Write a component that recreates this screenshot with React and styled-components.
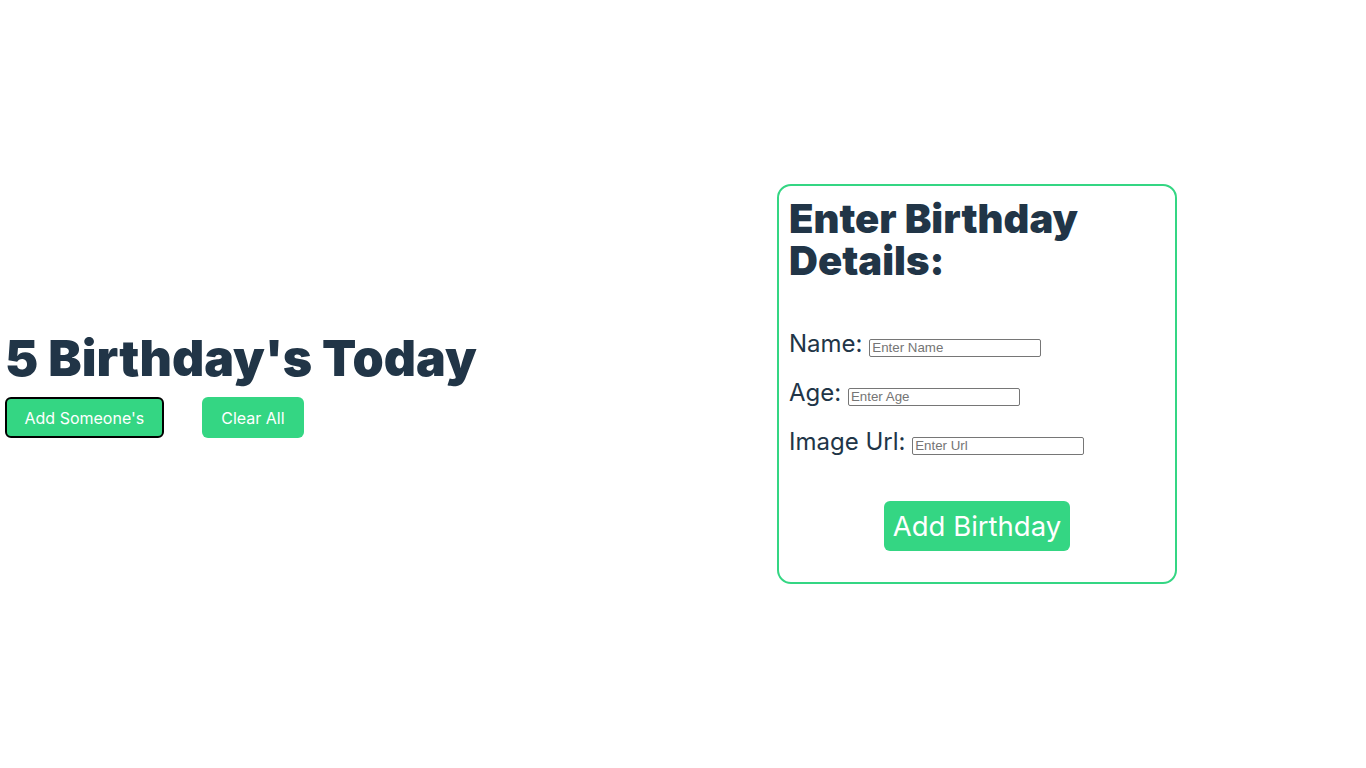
import styled, { createGlobalStyle } from 'styled-components';

const GlobalStyle = createGlobalStyle`
  body {
    margin: 0;
    font-family: Inter, "Noto Sans", sans-serif;
    color: #213547;
    background: #ffffff;
  }
`;

const Hero = styled.main`
  display: flex;
  align-items: center;
  width: 100vw;
  height: 100vh;
`;

const LeftPanel = styled.section`
  flex: 0 0 777px;
  box-sizing: border-box;
  padding-left: 5px;
`;

const Title = styled.h1`
  margin: 0 0 11px;
  font-size: 50px;
  line-height: 56px;
  font-weight: 900;
  color: #213547;
`;

const ButtonRow = styled.div`
  display: flex;
  gap: 38px;
`;

const ActionButton = styled.button`
  height: 41px;
  padding: 0 17.5px;
  border: 2px solid ${(props) => (props.focused ? '#000' : 'transparent')};
  border-radius: 6px;
  background: #34d683;
  color: #fff;
  font-family: Inter, sans-serif;
  font-size: 16px;
  cursor: pointer;
`;

const Card = styled.form`
  width: 400px;
  height: 400px;
  box-sizing: border-box;
  border: 2px solid #34d683;
  border-radius: 14px;
  padding: 12px 10px 10px;
`;

const CardTitle = styled.h2`
  margin: 0 0 37px;
  font-size: 40px;
  line-height: 42px;
  font-weight: 900;
  color: #213547;
`;

const Field = styled.div`
  font-size: 24px;
  line-height: 49px;
  color: #213547;
`;

const Input = styled.input`
  width: 172px;
  height: 18px;
  box-sizing: border-box;
  padding: 0 2px;
  border: 1px solid #767676;
  border-radius: 2px;
  font-family: "Liberation Sans", Arial, sans-serif;
  font-size: 13.33px;
  color: #000;
  &::placeholder {
    color: #757575;
  }
`;

const SubmitRow = styled.div`
  display: flex;
  justify-content: center;
  margin-top: 35px;
`;

const SubmitButton = styled.button`
  height: 50px;
  padding: 0 9px;
  border: none;
  border-radius: 6px;
  background: #34d683;
  color: #fff;
  font-family: Inter, sans-serif;
  font-size: 27.5px;
  cursor: pointer;
`;

const BirthdayList = styled.section`
  min-height: 1880px;
`;

export default function App() {
  return (
    <>
      <GlobalStyle />
      <Hero>
        <LeftPanel>
          <Title>5 Birthday's Today</Title>
          <ButtonRow>
            <ActionButton type="button" focused>
              Add Someone's
            </ActionButton>
            <ActionButton type="button">Clear All</ActionButton>
          </ButtonRow>
        </LeftPanel>
        <Card onSubmit={(e) => e.preventDefault()}>
          <CardTitle>Enter Birthday Details:</CardTitle>
          <Field>
            Name: <Input type="text" placeholder="Enter Name" />
          </Field>
          <Field>
            Age: <Input type="number" placeholder="Enter Age" />
          </Field>
          <Field>
            Image Url: <Input type="text" placeholder="Enter Url" />
          </Field>
          <SubmitRow>
            <SubmitButton type="submit">Add Birthday</SubmitButton>
          </SubmitRow>
        </Card>
      </Hero>
      <BirthdayList />
    </>
  );
}
